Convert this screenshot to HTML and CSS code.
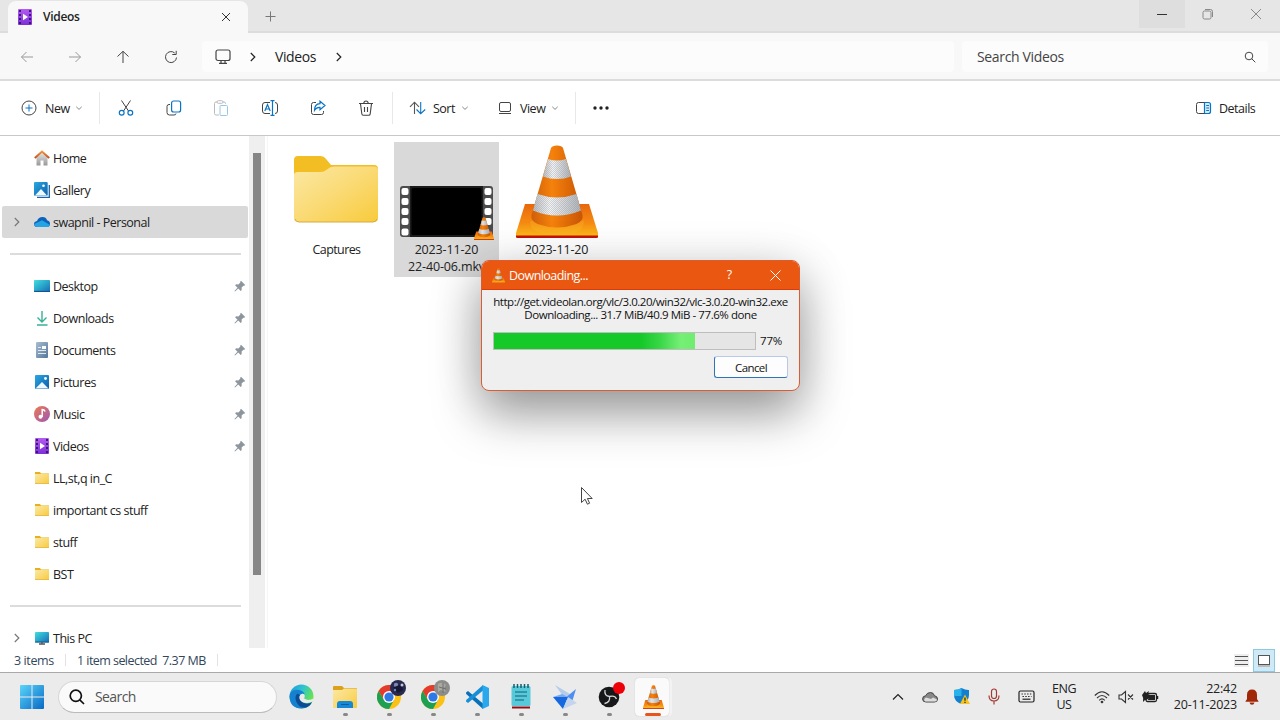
FILE: index.html
```html
<!DOCTYPE html>
<html lang="en">
<head>
<meta charset="utf-8">
<title>Videos</title>
<link rel="stylesheet" href="styles.css">
</head>
<body>
<svg class="defs" width="0" height="0" aria-hidden="true">
  <defs>
    <linearGradient id="gFolder" x1="0" y1="0" x2="1" y2="1"><stop offset="0" stop-color="#fbe8a4"/><stop offset=".5" stop-color="#fada74"/><stop offset="1" stop-color="#f8cb3c"/></linearGradient>
    <linearGradient id="gOrange" x1="0" y1="0" x2="1" y2="0"><stop offset="0" stop-color="#cf5f08"/><stop offset=".4" stop-color="#f5820c"/><stop offset="1" stop-color="#c95404"/></linearGradient>
    <linearGradient id="gBase" x1="0" y1="0" x2="0" y2="1"><stop offset="0" stop-color="#e9660c"/><stop offset=".55" stop-color="#f58a12"/><stop offset="1" stop-color="#fdc21c"/></linearGradient>
    <linearGradient id="gWhite" x1="0" y1="0" x2="1" y2="0"><stop offset="0" stop-color="#b9bcbf"/><stop offset=".35" stop-color="#f4f5f6"/><stop offset="1" stop-color="#adb1b5"/></linearGradient>
    <linearGradient id="gPurple" x1="0" y1="0" x2="0" y2="1"><stop offset="0" stop-color="#b35cf0"/><stop offset="1" stop-color="#7c2fd6"/></linearGradient>
    <linearGradient id="gBlue" x1="0" y1="0" x2="1" y2="1"><stop offset="0" stop-color="#2ba8e2"/><stop offset="1" stop-color="#0b5fa9"/></linearGradient>
    <linearGradient id="gTeal" x1="0" y1="0" x2="1" y2="1"><stop offset="0" stop-color="#3ee0e0"/><stop offset="1" stop-color="#176bb4"/></linearGradient>
    <linearGradient id="gMusic" x1="0" y1="0" x2="1" y2="1"><stop offset="0" stop-color="#ee7a4e"/><stop offset="1" stop-color="#9b57b8"/></linearGradient>
    <linearGradient id="gDoc" x1="0" y1="0" x2="1" y2="1"><stop offset="0" stop-color="#a9bdd1"/><stop offset="1" stop-color="#53779c"/></linearGradient>
    <linearGradient id="gWin" x1="0" y1="0" x2="1" y2="1"><stop offset="0" stop-color="#5bd5fb"/><stop offset="1" stop-color="#0869c4"/></linearGradient>
    <linearGradient id="gEdge" x1="0" y1="0" x2="1" y2=".5"><stop offset="0" stop-color="#2394dc"/><stop offset=".5" stop-color="#2fc3d0"/><stop offset="1" stop-color="#6be548"/></linearGradient>
    <linearGradient id="gRoof" x1="0" y1="0" x2="0" y2="1"><stop offset="0" stop-color="#ef9340"/><stop offset="1" stop-color="#c75018"/></linearGradient>
    <linearGradient id="gWall" x1="0" y1="0" x2="0" y2="1"><stop offset="0" stop-color="#e8e8e8"/><stop offset="1" stop-color="#989898"/></linearGradient>
    <pattern id="mesh" width="2" height="2" patternUnits="userSpaceOnUse"><path d="M0 0h1v1H0zM1 1h1v1H1z" fill="#8b9097" opacity=".35"/></pattern>
  </defs>
  <symbol id="cone" viewBox="0 0 82 94">
    <path d="M9 59h64l9 29v4q0 1-2 1H2q-2 0-2-1v-4z" fill="url(#gBase)"/>
    <path d="M0 90.500h82v1.500q0 1-2 1H2q-2 0-2-1z" fill="#c3130b"/>
    <path d="M14 76q0 9 10 12 17 4 34 0 10-3 10-12z" fill="#fdb92b" opacity=".3"/>
    <path d="M35 3Q36 .5 41 .5T47 3L66.500 70q1 6-6 9-19.500 7-39 0-7-3-6-9z" fill="url(#gOrange)"/>
    <path d="M32 14q9 3 18 0l5 17.500q-14 5-28 0z" fill="url(#gWhite)"/>
    <path d="M32 14q9 3 18 0l5 17.500q-14 5-28 0z" fill="url(#mesh)"/>
    <path d="M21.500 49q19.500 7 39 0l4.500 16.500q-24 10-48 0z" fill="url(#gWhite)"/>
    <path d="M21.500 49q19.500 7 39 0l4.500 16.500q-24 10-48 0z" fill="url(#mesh)"/>
  </symbol>
  <symbol id="folder-s" viewBox="0 0 16 16"><path d="M1 2h5l1 1.500h8V13H1z" fill="#e9b01e"/><path d="M1 4h14v9.500H1z" fill="url(#gFolder)"/><path d="M1 13.500h14" stroke="#e7bd4c"/></symbol>
  <symbol id="video" viewBox="0 0 16 16"><rect x="1" width="14" height="16" rx="1" fill="url(#gPurple)"/><path d="M3 1v14M13 1v14" stroke="#33136b" stroke-width="1.800" stroke-dasharray="2 2"/><path d="M6 4.800v6.400L11 8z" fill="#fff"/></symbol>
  <symbol id="pin" viewBox="0 0 12 12"><path d="M7 .8 11.200 5l-1 .8-.7-.1-1.900 1.900.1 2.300-1 1L4.300 8.500 1 11.600.4 11 3.500 7.700 1.100 5.300l1-1 2.300.1 1.900-1.900L6.200 1.800z" fill="#8d959d"/></symbol>
  <symbol id="right" viewBox="0 0 8 12"><path d="M1.800 2 5.800 6l-4 4" fill="none" stroke="currentColor" stroke-width="1.200"/></symbol>
  <symbol id="down" viewBox="0 0 8 8"><path d="M1.300 2.800 4 5.400l2.700-2.600" fill="none" stroke="#888" stroke-width="1"/></symbol>
  <symbol id="chrome" viewBox="0 0 24 24"><circle cx="12" cy="12" r="12" fill="#fbc116"/><path d="M1.600 6A12 12 0 0 1 22.400 6H12L7 15z" fill="#e33b2e"/><path d="M1.600 6A12 12 0 0 0 12 24l5-9-10 0z" fill="#1da052"/><circle cx="12" cy="12" r="6" fill="#fff"/><circle cx="12" cy="12" r="4.600" fill="#2f78e8"/></symbol>
</svg>

<div class="window">
  <header class="titlebar">
    <div class="tab">
      <svg class="i16"><use href="#video"/></svg>
      <span class="tab-name">Videos</span>
      <svg width="10" height="10" viewBox="0 0 10 10" fill="none" stroke="#333"><path d="M1 1l8 8M9 1 1 9"/></svg>
    </div>
    <svg class="plus" width="11" height="11" viewBox="0 0 11 11" stroke="#777"><path d="M5.500.5v10M.5 5.500h10"/></svg>
    <div class="controls">
      <span class="ctl hover"><svg width="12" height="12" viewBox="0 0 12 12"><path d="M1 6.500h10" stroke="#333"/></svg></span>
      <span class="ctl"><svg width="12" height="12" viewBox="0 0 12 12" fill="none" stroke="#888"><rect x="1" y="3" width="8" height="8" rx="1.500"/><path d="M3 1.500h5.500q2 0 2 2V9"/></svg></span>
      <span class="ctl close"><svg width="12" height="12" viewBox="0 0 12 12" stroke="#888"><path d="M1 1l10 10M11 1 1 11"/></svg></span>
    </div>
  </header>

  <nav class="navbar">
    <div class="navs">
      <svg width="14" height="14" viewBox="0 0 14 14" fill="none" stroke="#999"><path d="M13 7H1.500M6.500 2l-5 5 5 5"/></svg>
      <svg width="14" height="14" viewBox="0 0 14 14" fill="none" stroke="#999"><path d="M1 7h11.500M7.500 2l5 5-5 5"/></svg>
      <svg width="14" height="14" viewBox="0 0 14 14" fill="none" stroke="#444"><path d="M7 13V1.500M1.500 6.500 7 1.300l5.500 5.200"/></svg>
      <svg width="14" height="14" viewBox="0 0 14 14" fill="none" stroke="#444"><path d="M12.500 7.500A5.500 5.500 0 1 1 10.700 3M8.300 4.500h3.900V.8"/></svg>
    </div>
    <div class="address">
      <svg width="16" height="16" viewBox="0 0 16 16" fill="none" stroke="#444" stroke-width="1.200"><rect x="1" y="1" width="14" height="10.500" rx="2"/><path d="M6 12v2M10 12v2M4 14.300h8"/></svg>
      <svg class="chev c1"><use href="#right"/></svg>
      <span class="crumb">Videos</span>
      <svg class="chev"><use href="#right"/></svg>
    </div>
    <div class="search">
      <span>Search Videos</span>
      <svg width="12" height="12" viewBox="0 0 12 12" fill="none" stroke="#444"><circle cx="5" cy="5" r="3.800"/><path d="M7.800 7.800 11.300 11.300"/></svg>
    </div>
  </nav>

  <div class="toolbar">
    <div class="tool new"><svg width="16" height="16" viewBox="0 0 16 16" fill="none" stroke="#444"><circle cx="8" cy="8" r="7"/><path d="M8 4.500v7M4.500 8h7" stroke="#0a74c4"/></svg><span>New</span><svg class="d8"><use href="#down"/></svg></div>
    <i class="vsep"></i>
    <div class="actions">
      <svg width="16" height="16" viewBox="0 0 16 16" fill="none" stroke="#444"><path d="M3.500.5 10.500 11M12.500.5 5.500 11"/><g stroke="#0a74c4" stroke-width="1.200"><circle cx="3.700" cy="12.800" r="2.400"/><circle cx="12.300" cy="12.800" r="2.400"/></g></svg>
      <svg width="16" height="16" viewBox="0 0 16 16" fill="none" stroke="#444"><path d="M4 4.500H3q-2 0-2 2v6q0 2.500 2.500 2.500H8q2 0 2-1.500"/><rect x="5.600" y="1" width="9" height="11" rx="2" stroke="#0a74c4" stroke-width="1.200"/></svg>
      <svg width="16" height="16" viewBox="0 0 16 16" fill="none" stroke="#bbb"><path d="M6 15H3q-1.500 0-1.500-1.500v-10Q1.500 2 3 2h1m6 0h1q1.500 0 1.500 1.500V4"/><rect x="4" y=".7" width="6" height="2.600" rx="1.300"/><rect x="7" y="5.500" width="7.500" height="10" rx="1" stroke="#94c8e8"/></svg>
      <svg width="18" height="16" viewBox="0 0 18 16" fill="none" stroke="#444"><path d="M9 2.500H4Q1.500 2.500 1.500 5v6q0 2.500 2.500 2.500h5M14 2.500q2.500 0 2.500 2.500v6q0 2.500-2.500 2.500"/><path d="M9.500.6h4M9.500 15.400h4M11.500.6v14.800M3.800 11 6.500 4.500 9.200 11M4.800 9h3.400" stroke="#0a74c4" stroke-width="1.200"/></svg>
      <svg width="16" height="16" viewBox="0 0 16 16" fill="none" stroke="#444"><path d="M6 2.500H3.500Q1.500 2.500 1.500 4.500v8q0 2 2 2h8q2 0 2-2V11"/><path d="M10 1.200 15 5.500l-5 4.300V7.300q-3.500-.3-5.500 3Q4.500 4 10 3.700z" stroke="#0a74c4" stroke-width="1.200"/></svg>
      <svg width="16" height="16" viewBox="0 0 16 16" fill="none" stroke="#444" stroke-width="1.100"><path d="M1 3.500h14M5.800 3.200Q6 1 8 1t2.200 2.200M2.500 3.800l1.300 10Q4 15.200 5.200 15.200h5.600q1.200 0 1.400-1.400l1.300-10M6.500 7v5M9.500 7v5"/></svg>
    </div>
    <i class="vsep"></i>
    <div class="tool sort"><svg width="17" height="14" viewBox="0 0 17 14" fill="none" stroke-width="1.100"><path d="M5.500 13V1.500M1 5.800 5.500 1.200 10 5.800" stroke="#555"/><path d="M11.700 1v11.500M7.500 8.500l4.200 4.200 4.500-4.200" stroke="#0a74c4"/></svg><span>Sort</span><svg class="d8"><use href="#down"/></svg></div>
    <div class="tool view"><svg width="14" height="14" viewBox="0 0 14 14" fill="none" stroke="#444"><rect x="1.500" y="1.500" width="11" height="9" rx="1.500"/><path d="M1 12.500h12"/></svg><span>View</span><svg class="d8"><use href="#down"/></svg></div>
    <i class="vsep"></i>
    <svg class="dots" width="18" height="4" viewBox="0 0 18 4" fill="#222"><circle cx="3" cy="2" r="1.700"/><circle cx="9" cy="2" r="1.700"/><circle cx="15" cy="2" r="1.700"/></svg>
    <div class="tool details"><svg width="17" height="14" viewBox="0 0 17 14" fill="none"><path d="M9.500 1.500h4q2 0 2 2v7q0 2-2 2h-4z" fill="#d5ecfa" stroke="#0a74c4" stroke-width="1.200"/><path d="M9.500 1.500H3.500q-2 0-2 2v7q0 2 2 2h6" stroke="#444"/><path d="M11.200 4.500h2.800M11.200 7h2.800M11.200 9.500h2.800" stroke="#0a74c4"/></svg><span>Details</span></div>
  </div>

  <main class="body">
    <aside class="side">
      <div class="row"><svg class="i16" viewBox="0 0 16 16"><path d="M2.500 7v8.500h4v-5h3v5h4V7L8 2z" fill="url(#gWall)"/><path d="M.8 8 8 1.500 15.200 8" fill="none" stroke="url(#gRoof)" stroke-width="2"/></svg><span>Home</span></div>
      <div class="row"><svg class="i16" viewBox="0 0 16 16"><path d="M15.300 3v12.300H3" fill="none" stroke="#1763ad" stroke-width="1.300"/><rect width="13.700" height="13.800" rx="1" fill="url(#gBlue)"/><path d="M1 13.500 7 7l6 6.500z" fill="#eef8ff"/><circle cx="9.500" cy="3.700" r="1.300" fill="#fff"/></svg><span>Gallery</span></div>
      <div class="row selected"><svg class="exp"><use href="#right"/></svg><svg class="i16" viewBox="0 0 16 16"><path d="M3.500 13Q0 13 0 10q0-2.500 3-3 1.500-4 5.500-4 3.500 0 4.500 3.200 3 .5 3 3.500 0 3.300-3.500 3.300z" fill="#0c61b8"/><path d="M4 13Q.5 13 .2 10L8 6.200l7.700 4.500Q15.500 13 12.500 13z" fill="#25a4e5"/></svg><span>swapnil - Personal</span></div>
      <div class="rule"></div>
      <div class="row"><svg class="i16" viewBox="0 0 16 16"><rect y="2" width="16" height="12" rx=".8" fill="url(#gTeal)"/><path d="M0 13.400h16" stroke="#124f8f"/></svg><span>Desktop</span><svg class="pin"><use href="#pin"/></svg></div>
      <div class="row"><svg class="i16" viewBox="0 0 16 16" fill="none" stroke="#37b198" stroke-width="1.400"><path d="M8 1v11M3.500 7.500 8 12l4.500-4.500M3 15h10.500"/></svg><span>Downloads</span><svg class="pin"><use href="#pin"/></svg></div>
      <div class="row"><svg class="i16" viewBox="0 0 16 16"><rect x="2" width="12" height="16" rx="1" fill="url(#gDoc)"/><path d="M4 5.500h3M4 8.500h8M4 11.500h8" stroke="#e0e8f0"/><path d="M8 4h4v3H8z" fill="#fff"/></svg><span>Documents</span><svg class="pin"><use href="#pin"/></svg></div>
      <div class="row"><svg class="i16" viewBox="0 0 16 16"><rect x="1" y="1" width="14" height="14" rx="1" fill="url(#gBlue)"/><path d="M1.500 14.500 8 8l6.500 6.500z" fill="#eef8ff"/><circle cx="11.500" cy="4.500" r="1.400" fill="#fff"/></svg><span>Pictures</span><svg class="pin"><use href="#pin"/></svg></div>
      <div class="row"><svg class="i16" viewBox="0 0 16 16"><circle cx="8" cy="8" r="8" fill="url(#gMusic)"/><circle cx="6.500" cy="10.800" r="2" fill="#fff"/><path d="M8.200 11V3.500q2 0 3 2" fill="none" stroke="#fff" stroke-width="1.500"/></svg><span>Music</span><svg class="pin"><use href="#pin"/></svg></div>
      <div class="row"><svg class="i16"><use href="#video"/></svg><span>Videos</span><svg class="pin"><use href="#pin"/></svg></div>
      <div class="row"><svg class="i16"><use href="#folder-s"/></svg><span>LL,st,q in_C</span></div>
      <div class="row"><svg class="i16"><use href="#folder-s"/></svg><span>important cs stuff</span></div>
      <div class="row"><svg class="i16"><use href="#folder-s"/></svg><span>stuff</span></div>
      <div class="row"><svg class="i16"><use href="#folder-s"/></svg><span>BST</span></div>
      <div class="rule"></div>
      <div class="row"><svg class="exp"><use href="#right"/></svg><svg class="i16" viewBox="0 0 16 16"><rect x="1" y="2" width="14" height="10.500" rx=".8" fill="url(#gTeal)"/><path d="M1 12h14" stroke="#145a93"/><path d="M8 12v2M5 14h6" stroke="#555" stroke-width="1.300"/></svg><span>This PC</span></div>
    </aside>
    <div class="scroll"><div class="thumb"></div></div>
    <section class="files">
      <div class="file"><div class="thumbnail"><svg class="bigfolder" width="84" height="68" viewBox="0 0 84 68"><path d="M0 4q0-4 4-4h22q4 0 6 3l5 6h43q4 0 4 4v30H0z" fill="#f3bd24"/><path d="M0 19q0-3 4-3h22q4 0 7-2.500 3-3 7-3h40q4 0 4 3.500v48q0 4-4 4H4q-4 0-4-4z" fill="url(#gFolder)"/><path d="M1 63q1 3 4 3h74q3 0 4-3" fill="none" stroke="#d6aa42"/></svg></div><span class="cap">Captures</span></div>
      <div class="file sel"><div class="thumbnail"><svg class="film" width="96" height="54" viewBox="0 0 96 54"><rect x="1" width="93" height="51" rx="3" fill="#4c4c4c"/><path d="M11 0h73v51H11z" fill="#1b1b1b"/><rect x="12.500" y="2" width="70" height="47" rx="1.500"/><g fill="#fff"><rect x="2.500" y="2" width="7" height="7" rx="2"/><rect x="2.500" y="12" width="7" height="7" rx="2"/><rect x="2.500" y="22" width="7" height="7" rx="2"/><rect x="2.500" y="32" width="7" height="7" rx="2"/><rect x="2.500" y="42.500" width="7" height="7" rx="2"/><rect x="85.500" y="2" width="7" height="7" rx="2"/><rect x="85.500" y="12" width="7" height="7" rx="2"/><rect x="85.500" y="22" width="7" height="7" rx="2"/><rect x="85.500" y="32" width="7" height="7" rx="2"/></g><use href="#cone" x="75" y="31" width="20" height="23"/></svg></div><span>2023-11-20<br>22-40-06.mkv</span></div>
      <div class="file last"><div class="thumbnail"><svg width="82" height="94"><use href="#cone"/></svg></div><span>2023-11-20</span></div>
    </section>
  </main>

  <footer class="status">
    <span class="s1">3 items</span><i></i><span class="s2">1 item selected&nbsp; 7.37 MB</span><i></i>
    <div class="modes">
      <svg width="15" height="13" viewBox="0 0 15 13"><rect width="15" height="13" fill="#eee"/><path d="M1 2.500h13M1 6.500h13M1 10.500h13" stroke="#555"/></svg>
      <div class="mode"><svg width="14" height="13" viewBox="0 0 14 13"><path d="M1 11h12v2H1z" fill="#bbb"/><rect x="1.500" y="1.500" width="11" height="9" fill="#fff" stroke="#555"/></svg></div>
    </div>
  </footer>
</div>

<div class="taskbar">
  <svg class="win" width="24" height="24" viewBox="0 0 24 24" fill="url(#gWin)"><path d="M0 1q0-1 1-1h10.500v11.500H0zM12.500 0H23q1 0 1 1v10.500H12.500zM0 12.500h11.500V24H1q-1 0-1-1zM12.500 12.500H24V23q0 1-1 1H12.500z"/></svg>
  <div class="tsearch"><svg width="16" height="16" viewBox="0 0 16 16" fill="none" stroke="#111" stroke-width="1.700"><circle cx="6.800" cy="6.800" r="5.600"/><path d="M10.800 10.800 15 15"/></svg><span>Search</span></div>
  <div class="apps">
    <div class="app"><svg width="25" height="25" viewBox="0 0 24 24"><circle cx="12" cy="12" r="11.500" fill="url(#gEdge)"/><path d="M.5 12Q1 6 7 5.500q6 0 8 4-4-1-5 2.500-.5 5 5 6.500 4 1 7-1.500-3 6.500-10 6.500Q1 23.500.5 12z" fill="#1582d0"/><path d="M8 9q-3 3-1 8 3 6.500 9 5.500 4-1 6-5-4 2.500-8 .5-5-2.500-3.500-7.500z" fill="#0c4c94"/><path d="M10 12q1-3.500 4-2.500 2 1 .5 4.500 4 2.800 9.200 0Q23.500 17 21 17.500q-4 1.500-8 0Q9.500 15.500 10 12z" fill="#ebebeb"/></svg></div>
    <div class="app run"><svg width="24" height="24" viewBox="0 0 24 24"><path d="M0 2q0-1 1-1h8l2 2h12q1 0 1 1v10H0z" fill="#dca01b"/><path d="M0 5h9l2-1.500h12q1 0 1 1V22q0 1-1 1H1q-1 0-1-1z" fill="url(#gFolder)"/><path d="M4 23v-4q0-3 3-3h10q3 0 3 3v4z" fill="#1688d6"/><path d="M8 19.500h8" stroke="#0b5ca5"/></svg></div>
    <div class="app run"><svg width="24" height="24"><use href="#chrome"/></svg><svg class="avatar" viewBox="0 0 16 16"><circle cx="8" cy="8" r="8" fill="#27294f"/><circle cx="6" cy="5" r="2.200" fill="#7e87b1"/><path d="M3 7.500 12 4l1 6-5 3z" fill="#151735"/><circle cx="12" cy="5" r="1.500" fill="#c4c5d5"/><circle cx="5" cy="10" r="1.200" fill="#6a89be"/></svg></div>
    <div class="app run"><svg width="24" height="24"><use href="#chrome"/></svg><svg class="avatar" viewBox="0 0 16 16"><circle cx="8" cy="8" r="8" fill="#8c8d88"/><path d="M4 4q4-3 8 1l-2 3 2 4-5-2-3 2z" fill="#aaa9a1"/><path d="M9 3v10M5 7l7 2" stroke="#6c7072"/></svg></div>
    <div class="app run"><svg width="24" height="24" viewBox="0 0 24 24"><path d="M1 7.500 3 6l15 12.500V24L1.200 9z" fill="#0872b9"/><path d="M1 16.500 3 18 18 5.500V0L1.200 15z" fill="#168fd8"/><path d="M17.500 0 24 3v18l-6.500 3z" fill="#2aa8ed"/></svg></div>
    <div class="app run"><svg width="20" height="25" viewBox="0 0 20 25"><rect x=".5" y="2" width="19" height="20" rx="1.500" fill="#58c9d9"/><path d="M3 0v4M6.500 0v4M10 0v4M13.500 0v4M17 0v4" stroke="#16606d" stroke-width="1.500"/><path d="M4 8h12M4 12h12M4 16h9" stroke="#116278" stroke-width="1.200"/><path d="M1 23.500h18" stroke="#930e16" stroke-width="2"/></svg></div>
    <div class="app run"><svg width="24" height="24" viewBox="0 0 24 24"><path d="m2 0 15 9-4 6z" fill="#b5cbea"/><path d="m23 4-4 13-8-3z" fill="#4c8ff0"/><path d="M0 12h15l-5 12z" fill="#1668de"/><path d="m0 12 9-3 6 3z" fill="#7aa9ee"/><path d="m24 18-9-6-5 12z" fill="#c3d4ec"/></svg></div>
    <div class="app run"><svg width="22" height="22" viewBox="0 0 22 22"><circle cx="11" cy="11" r="10.300" fill="#17181a"/><g fill="none" stroke="#d5d5d5" stroke-width="1.300"><path d="M7 4q-1 6 4.500 6.500M11.500 10.500Q17 9 18.500 13M11.500 10.500q1 6-5 7"/></g></svg><b class="rec"></b></div>
    <div class="app run active"><svg width="21" height="24"><use href="#cone"/></svg></div>
  </div>
  <div class="tray">
    <svg width="12" height="8" viewBox="0 0 12 8" fill="none" stroke="#222" stroke-width="1.200"><path d="M1 6.500 6 1.500l5 5"/></svg>
    <svg width="16" height="16" viewBox="0 0 16 16"><path d="M4 13Q.6 13 .6 10t3-3.200Q5 3.500 8.500 3.500q3 0 4 3.200 3 .6 3 3.300 0 3-3 3z" fill="#888" stroke="#444"/><path d="M3 12.500q-2-2 1-4l5 1.500 2-1.500 4 2q0 2-3 2z" fill="#ddd"/></svg>
    <svg width="16" height="17" viewBox="0 0 16 17"><path d="M7.500 0q4 2.200 7.500 2v5q0 6.500-7.500 9Q0 13.500 0 7V2q4.500 0 7.500-2z" fill="#1280cf"/><path d="M7.500 0v8H0V2q4.500 0 7.500-2z" fill="#2ab1ea"/><path d="m11 6.500 5 9.500H6z" fill="#f5c324"/><path d="M11 9.500v3.200M11 13.800v1.200" stroke="#222" stroke-width="1.200"/></svg>
    <svg width="12" height="17" viewBox="0 0 12 17" fill="none" stroke="#a43a34" stroke-width="1.200"><rect x="3.500" y="1" width="5" height="9.500" rx="2.500"/><path d="M1 7.500q0 5.500 5 5.500t5-5.500M6 13v3.500"/></svg>
    <svg width="17" height="13" viewBox="0 0 17 13" fill="none" stroke="#222" stroke-width="1.200"><rect x="1" y="1" width="15" height="11" rx="1.500"/><path d="M3.500 4h10M4.500 6.500h9" stroke-dasharray="1.400 1.400"/><path d="M4.500 9.200h8"/></svg>
    <div class="lang">ENG<br>US</div>
    <svg width="16" height="14" viewBox="0 0 16 14" fill="none" stroke="#333" stroke-width="1.100"><path d="M.8 5.500q7.200-7.500 14.400 0M3 8q5-5 10 0M5.200 10.300q2.800-2.700 5.600 0"/><circle cx="8" cy="12" r=".8" fill="#333"/></svg>
    <svg width="16" height="14" viewBox="0 0 16 14" fill="none" stroke="#333" stroke-width="1.100"><path d="M1 5h2.500L7.500 1.500v11L3.500 9H1zM10 4.500l5 5M15 4.500l-5 5"/></svg>
    <svg width="17" height="14" viewBox="0 0 17 14"><rect x="4" y="3.500" width="10.500" height="8" rx="1.500" fill="none" stroke="#222" stroke-width="1.300"/><path d="M15.500 6v3" stroke="#222" stroke-width="1.500"/><path d="M6 9.700 8 5h5v5H6zM0 5 3 1l1 2 3-2-1 3 2 1q-1 5-5 5l-2 2Q2 8 0 5z" fill="#222"/></svg>
    <div class="clock">22:42<br>20-11-2023</div>
    <svg width="14" height="16" viewBox="0 0 14 16"><path d="M7 .5q5 0 5 5.500v4l1.700 2.700H.3L2 10V6Q2 .5 7 .5zM4.500 13.500h5Q9 15.700 7 15.700T4.500 13.500z" fill="#a02708"/></svg>
  </div>
</div>

<div class="dialog">
  <div class="dtitle"><svg width="13" height="15"><use href="#cone"/></svg><span>Downloading...</span><b>?</b><svg width="11" height="11" viewBox="0 0 11 11" stroke="#fff"><path d="M.5.5l10 10M10.500.5l-10 10"/></svg></div>
  <div class="dbody">
    <p class="url">http://get.videolan.org/vlc/3.0.20/win32/vlc-3.0.20-win32.exe</p>
    <p class="prog">Downloading... 31.7 MiB/40.9 MiB - 77.6% done</p>
    <div class="barrow"><div class="bar"><div class="fill" style="width:77%"></div></div><span>77%</span></div>
    <button class="cancel">Cancel</button>
  </div>
</div>
<svg class="cursor" width="14" height="20" viewBox="0 0 14 20"><path d="M1.500 1.500v15l3.600-3.300 2.300 5 2.200-1-2.200-4.700h4.800z" fill="#fff" stroke="#444"/></svg>
</body>
</html>
```

FILE: styles.css
```css
* { box-sizing: border-box; }
body { margin: 0; width: 1280px; height: 720px; overflow: hidden; background: #fff; color: #222; font: 12.5px/16px "Open Sans", "Noto Sans", sans-serif; letter-spacing: -.2px; }
svg { flex: none; display: block; }
.defs { position: absolute; }
.i16 { width: 16px; height: 16px; }
.window { height: 672px; display: flex; flex-direction: column; }
.titlebar { height: 33px; flex: none; display: flex; background: #e6e6e6; border-bottom: 2px solid #dcdcdc; padding-left: 8px; }
.tab { width: 240px; height: 32px; margin-top: 1px; background: #f8f8f8; border-radius: 8px 8px 0 0; display: flex; align-items: center; padding: 0 17px 0 9px; }
.tab-name { flex: 1; margin-left: 10px; font-weight: 600; font-size: 12px; letter-spacing: -.3px; }
.plus { margin: 11px 0 0 17px; }
.controls { margin-left: auto; display: flex; height: 28px; }
.ctl { width: 46px; display: flex; align-items: center; justify-content: center; }
.ctl.hover { background: #dedede; }
.ctl.close { width: 49px; }
.navbar { height: 48px; flex: none; background: #f8f8f8; border-bottom: 2px solid #dcdcdc; display: flex; padding: 8px 12px 7px 0; font-size: 14px; }
.navs { width: 202px; padding-left: 20px; display: flex; align-items: center; gap: 34px; }
.address { width: 752px; background: #fcfcfc; border-radius: 4px; display: flex; align-items: center; padding-left: 13px; }
.chev { width: 8px; height: 12px; color: #222; }
.c1 { margin-left: 18px; }
.crumb { margin: 0 17px 0 18px; width: 43px; white-space: nowrap; letter-spacing: -.4px; }
.search { margin-left: 8px; flex: 1; background: #fcfcfc; border-radius: 4px; display: flex; justify-content: space-between; align-items: center; padding: 0 12px 0 15px; color: #444; letter-spacing: -.35px; }
.toolbar { height: 55px; flex: none; border-bottom: 1px solid #c8c8c8; display: flex; align-items: center; padding: 0 16px 0 21px; background: #fff; }
.tool { display: flex; align-items: center; letter-spacing: -.5px; white-space: nowrap; }
.tool span { padding-top: 1px; }
.d8 { width: 8px; height: 8px; }
.new { width: 78px; }
.new span { width: 30px; margin-left: 8px; }
.vsep { width: 1px; height: 32px; background: #e8e8e8; }
.actions { width: 292px; display: flex; align-items: center; justify-content: space-between; padding: 0 18px; }
.sort { margin-left: 16px; width: 89px; }
.sort span { width: 28px; margin-left: 7px; }
.view span { width: 31px; margin-left: 8px; }
.view { width: 77px; }
.dots { margin-left: 16px; }
.details { margin-left: auto; width: 69px; }
.details span { margin-left: 7px; }
.body { flex: 1; min-height: 0; display: flex; overflow: hidden; }
.side { width: 249px; padding: 6px 1px 0 2px; overflow: hidden; }
.row { height: 32px; display: flex; align-items: center; gap: 3px; padding-left: 32px; white-space: nowrap; position: relative; letter-spacing: -.5px; }
.row span { padding-top: 2px; }
.row.selected { background: #d9d9d9; border-radius: 2px; }
.exp { position: absolute; left: 11px; width: 8px; height: 12px; color: #777; }
.row .pin { width: 12px; height: 12px; margin-left: auto; margin-right: 2px; }
.rule { height: 32px; padding: 15px 7px 0 8px; }
.rule::before { content: ""; display: block; height: 2px; background: #dcdcdc; }
.scroll { width: 19px; background: #efefef; border-right: 1px solid #f5f5f5; box-shadow: inset -2px 0 #fff; padding: 17px 0 0 4px; }
.thumb { width: 8px; height: 422px; background: #868686; }
.files { display: flex; padding: 6px 0 0 15px; gap: 6px; }
.file { width: 105px; height: 135px; text-align: center; display: flex; flex-direction: column; align-items: center; line-height: 17px; letter-spacing: -.15px; }
.file span { padding-top: 1px; }
.file .cap { letter-spacing: -.6px; padding-left: 2px; }
.file.sel { background: #d9d9d9; }
.file.last { margin-left: -1px; }
.thumbnail { height: 98px; display: flex; align-items: flex-end; padding-bottom: 1px; }
.bigfolder { margin-bottom: 15px; }
.film { margin-bottom: -1px; }
.status { height: 24px; flex: none; display: flex; align-items: center; padding-left: 14px; color: #33475a; letter-spacing: -.55px; background: #fff; }
.status span { padding-top: 2px; }
.status i { width: 1px; height: 12px; background: #e2e2e2; }
.s1 { width: 51px; letter-spacing: -.4px; }
.status .s2 { padding-left: 11px; width: 151px; white-space: nowrap; }
.modes { margin-left: auto; display: flex; align-items: center; gap: 4px; padding-right: 5px; }
.mode { width: 22px; height: 23px; background: #cfe9f7; border: 1px solid #8ec9e4; display: flex; align-items: center; justify-content: center; }
.taskbar { height: 48px; background: #ebebeb; border-top: 1px solid #a9a9a9; display: flex; align-items: center; padding-left: 20px; }
.tsearch { margin-left: 14px; width: 219px; height: 32px; border: 1px solid #d6d6d6; border-bottom-color: #bbb; border-radius: 16px; background: #fafafa; display: flex; align-items: center; padding-left: 10px; gap: 10px; font-size: 14px; color: #555; letter-spacing: -.6px; }
.apps { display: flex; margin-left: 2px; }
.app { width: 44px; height: 46px; display: flex; align-items: center; justify-content: center; position: relative; }
.run::after { content: ""; position: absolute; bottom: 4px; left: 20px; width: 5px; height: 3px; border-radius: 2px; background: #888; }
.avatar { position: absolute; width: 16px; height: 16px; right: 5px; top: 6px; }
.rec { position: absolute; width: 12px; height: 12px; border-radius: 50%; background: #ed0008; right: 6px; top: 8px; }
.active::before { content: ""; position: absolute; inset: 4px 6px 4px 4px; border-radius: 4px; background: #fafafa; box-shadow: 0 0 1px #aaa, 3px 0 0 #f3f3f3; }
.active svg { position: relative; }
.active::after { left: 14px; width: 16px; background: #e8541b; }
.tray { margin-left: auto; display: grid; grid-template-columns: 32px 32px 32px 32px 32px 44px 32px 16px 32px 71px 30px; align-items: center; justify-items: center; padding-right: 13px; }
.lang { text-align: center; letter-spacing: -.4px; }
.clock { text-align: right; justify-self: end; white-space: nowrap; }
.dialog { position: absolute; left: 481px; top: 260px; width: 319px; height: 131px; border: 1px solid #dc5c32; border-radius: 8px; background: #efefef; box-shadow: 0 24px 48px rgba(0,0,0,.34), 0 6px 50px rgba(0,0,0,.14); overflow: hidden; font-size: 11.5px; color: #111; }
.dtitle { height: 29px; background: #e95710; border-bottom: 1px solid #dc3a08; color: #fff; display: flex; align-items: center; padding: 0 18px 0 10px; font-size: 12.5px; }
.dtitle span { margin-left: 4px; flex: 1; letter-spacing: -.55px; padding-top: 1px; }
.dtitle b { font-weight: 400; margin-right: 38px; }
.dbody { padding: 5px 11px 0; }
.dbody p { margin: 0; height: 13px; line-height: 13px; text-align: center; white-space: nowrap; }
.url { letter-spacing: -.47px; }
.prog { letter-spacing: -.44px; }
.barrow { display: flex; align-items: center; margin-top: 11px; gap: 4px; }
.bar { width: 263px; height: 18px; background: #e5e5e5; border: 1px solid #bebebe; }
.fill { height: 16px; background: linear-gradient(90deg, #14c928 0 73%, #36d645 82%, #76ef76 93%, #6eed6e); }
.cancel { display: block; margin: 6px 0 0 auto; width: 74px; height: 22px; background: #fdfdfd; border: 1px solid #2f74b8; border-top-color: #b8c8e8; border-right-color: #b8c8e8; border-radius: 3px; font: inherit; letter-spacing: -.6px; color: #111; padding: 1px 0 0; }
.cursor { position: absolute; left: 580px; top: 486px; }
```
